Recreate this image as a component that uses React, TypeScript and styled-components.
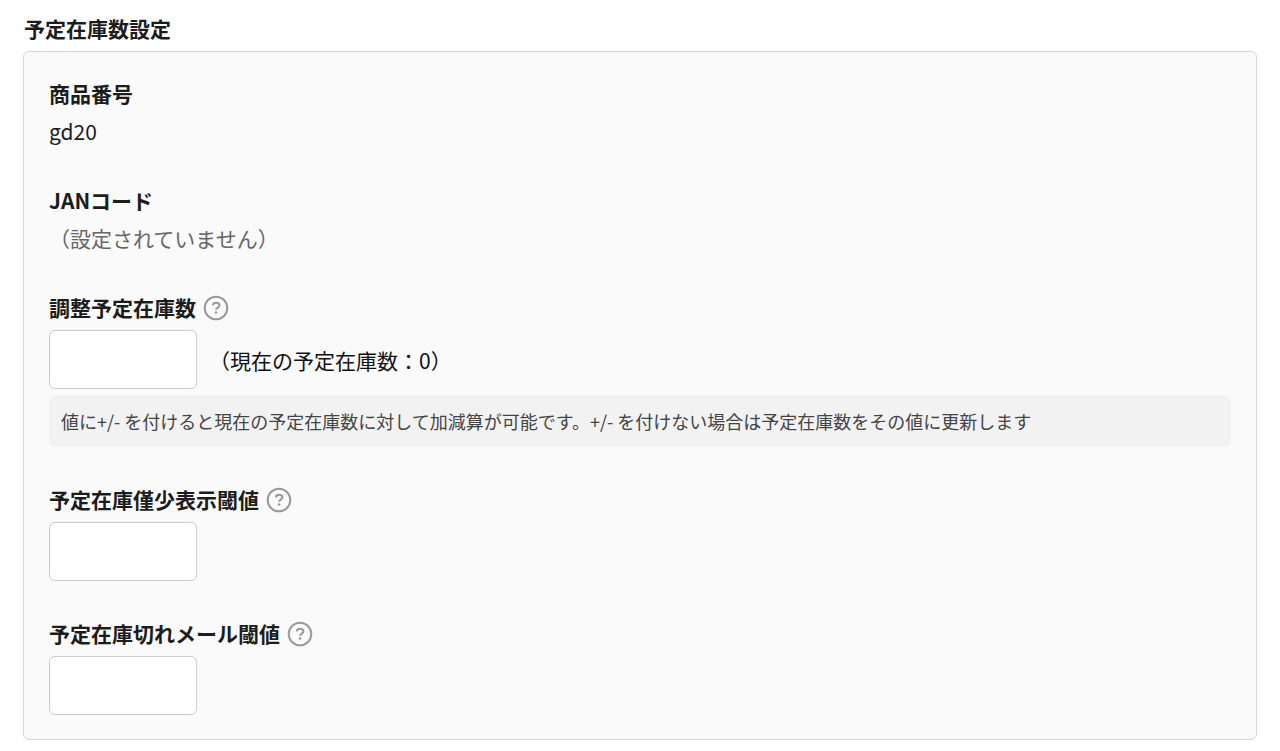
import React, { useId } from 'react';
import styled, { createGlobalStyle } from 'styled-components';

const GlobalStyle = createGlobalStyle`
  *, *::before, *::after { box-sizing: border-box; }
  body {
    margin: 0;
    background: #fff;
    color: #1c1c1c;
    font-family: "Noto Sans CJK JP", "Noto Sans", sans-serif;
    font-size: 21px;
    line-height: 32px;
  }
`;

const Page = styled.main`
  padding: 12px 23px;
`;

const Title = styled.h1`
  margin: 0 0 7px;
  padding-left: 1px;
  font-size: 21px;
  line-height: 32px;
  font-weight: 700;
`;

const Panel = styled.form`
  display: flex;
  flex-direction: column;
  gap: 36px;
  padding: 25px 25px 24px;
  border: 1px solid #d6d6d6;
  border-radius: 6px;
  background: #fafafa;
`;

const Field = styled.section`
  display: flex;
  flex-direction: column;
`;

const LabelRow = styled.div`
  display: flex;
  align-items: center;
  gap: 7px;
  height: 32px;
  margin-bottom: 7px;
  font-weight: 700;
`;

const Value = styled.div<{ $muted?: boolean }>`
  padding-bottom: 2px;
  line-height: 30px;
  color: ${(p) => (p.$muted ? '#666' : 'inherit')};
`;

const HelpButton = styled.button`
  display: flex;
  padding: 2px 0 0;
  border: 0;
  background: none;
  cursor: pointer;
`;

const InputRow = styled.div`
  display: flex;
  align-items: center;
  gap: 12px;
`;

const NumberInput = styled.input`
  width: 148px;
  height: 59px;
  padding: 0 12px;
  border: 1px solid #ccc;
  border-radius: 6px;
  background: #fff;
  font: inherit;
`;

const Aside = styled.span`
  color: #111;
`;

const Note = styled.p`
  margin: 6px 0 0;
  padding: 12px;
  border-radius: 6px;
  background: #f2f2f2;
  color: #444;
  font-size: 18px;
  line-height: 28px;
`;

function Help() {
  return (
    <HelpButton type="button" aria-label="ヘルプ">
      <svg width="26" height="26" viewBox="0 0 26 26" fill="none" stroke="#999" strokeWidth="2">
        <circle cx="13" cy="13" r="11.3" />
        <path d="M9.8 10.4C10 8.7 11.3 7.8 13.1 7.8c2 0 3.3 1.1 3.3 2.7 0 2.2-3.3 2.1-3.3 4.3" />
        <circle cx="13" cy="17.6" r="1.25" fill="#999" stroke="none" />
      </svg>
    </HelpButton>
  );
}

function InputField({ label, aside, note }: { label: string; aside?: string; note?: string }) {
  const id = useId();
  return (
    <Field>
      <LabelRow>
        <label htmlFor={id}>{label}</label>
        <Help />
      </LabelRow>
      <InputRow>
        <NumberInput id={id} type="text" inputMode="numeric" />
        {aside && <Aside>{aside}</Aside>}
      </InputRow>
      {note && <Note>{note}</Note>}
    </Field>
  );
}

export default function App() {
  return (
    <>
      <GlobalStyle />
      <Page>
        <Title>予定在庫数設定</Title>
        <Panel>
          <Field>
            <LabelRow>商品番号</LabelRow>
            <Value>gd20</Value>
          </Field>
          <Field>
            <LabelRow>JANコード</LabelRow>
            <Value $muted>（設定されていません）</Value>
          </Field>
          <InputField
            label="調整予定在庫数"
            aside="（現在の予定在庫数：0）"
            note="値に+/- を付けると現在の予定在庫数に対して加減算が可能です。+/- を付けない場合は予定在庫数をその値に更新します"
          />
          <InputField label="予定在庫僅少表示閾値" />
          <InputField label="予定在庫切れメール閾値" />
        </Panel>
      </Page>
    </>
  );
}
